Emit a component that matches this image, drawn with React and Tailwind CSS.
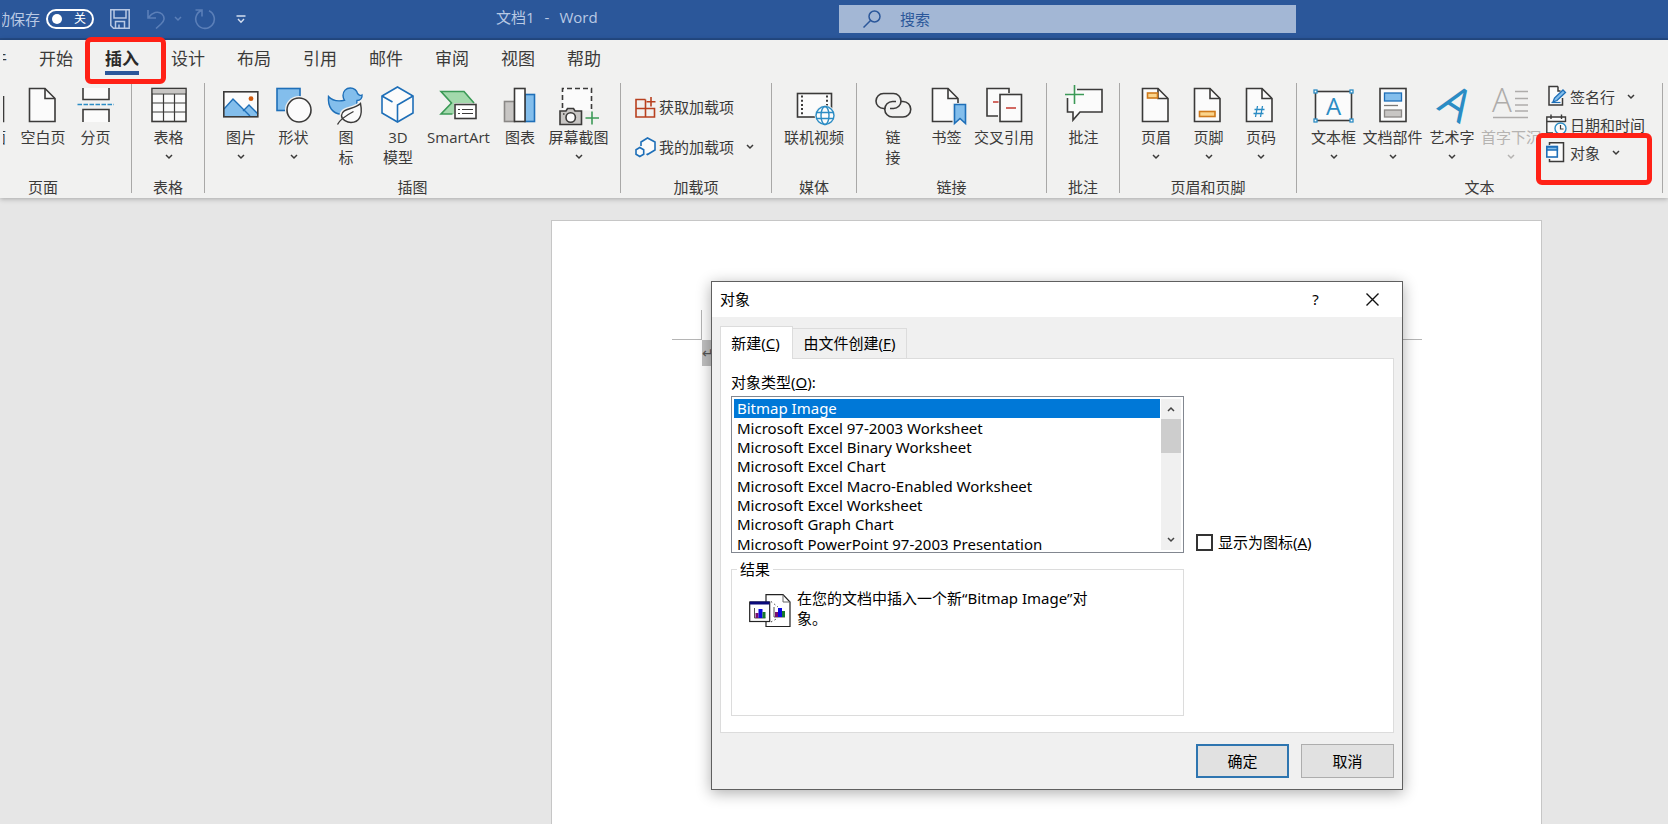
import React, { useState } from "react";

const INK = "#3b3a39";
const BLUE = "#1e6fb8";
const SKY = "#83beec";

function Icon({ children, w = 40, h = 36 }) {
  return (
    <svg
      width={w}
      height={h}
      viewBox={`0 0 ${w} ${h}`}
      fill="none"
      stroke={INK}
      strokeWidth="1.6"
      className="shrink-0 overflow-visible"
      aria-hidden="true"
    >
      {children}
    </svg>
  );
}

function Chevron({ className = "" }) {
  return (
    <svg width="8" height="6" viewBox="0 0 8 6" fill="none" stroke="currentColor" strokeWidth="1.5" className={`shrink-0 ${className}`} aria-hidden="true">
      <path d="M1 1l3 3 3-3" />
    </svg>
  );
}

function Page({ x = 6.5 }) {
  return (
    <g transform={`translate(${x} 2.5)`}>
      <path d="M15.5 0H0V33H25.5V10Z" fill="#fbfbfb" />
      <path d="M15.5 0V10H25.5" />
    </g>
  );
}

const BlankPage = () => (
  <Icon>
    <Page x={6.5} />
  </Icon>
);
const PageBreak = () => (
  <Icon>
    <path d="M7 2V13.5H33V2" fill="#fbfbfb" />
    <path d="M7 36V23.5H33V36" fill="#fbfbfb" />
    <path d="M1.5 18.5H38" stroke="#2b8cc4" strokeDasharray="4.5 1.5" />
  </Icon>
);
const TableIcon = () => (
  <Icon>
    <rect x="3" y="2.5" width="34" height="33" fill="#fbfbfb" />
    <rect x="3.8" y="3" width="32.5" height="4.5" fill="#c8c6c4" stroke="none" />
    <path d="M3 8H37M3 17H37M3 26H37M14.5 8V35M25.5 8V35" strokeWidth="1.2" />
  </Icon>
);
const PictureIcon = () => (
  <Icon>
    <rect x="2.8" y="5.8" width="34" height="25" fill="#fbfbfb" stroke="none" />
    <path d="M3 23L12 13L30 31H3Z" fill={SKY} stroke="none" />
    <path d="M22 25L28 19L37 28V31H27Z" fill={SKY} stroke="none" />
    <path d="M3 23L12 13L29 30M22 25L28 19L37 28" stroke={BLUE} strokeWidth="1.4" />
    <circle cx="30" cy="12.7" r="2.4" fill="#d05a0c" stroke="none" />
    <rect x="2.8" y="5.8" width="34" height="25" />
  </Icon>
);
const ShapesIcon = () => (
  <Icon>
    <rect x="3" y="2.5" width="23" height="22" fill={SKY} stroke={BLUE} />
    <circle cx="25" cy="24" r="14" fill="#f1f1f0" stroke="none" />
    <circle cx="25" cy="24" r="12" fill="#fbfbfb" />
  </Icon>
);
const DuckIcon = () => (
  <Icon>
    <path
      d="M2.5 10.5C6 14.5 11 15.8 18.5 14.3C17.3 12.5 17 11 17 9.5C17 5.200 20 2 24.3 2C28 2 31 4.500 31.5 7.500C33 9.500 35 9.800 36 9C36.500 12 34.500 14.500 31 14.500C30.500 16 31.300 17.500 30.500 20C28.500 25.500 22 28.500 15 28.200C7 27.500 1.500 21.500 2.500 10.500Z"
      fill={SKY}
      stroke={BLUE}
      strokeWidth="1.4"
    />
    <path d="M34.500 17.500C37 30 33 36.500 25 36.500C21.500 36.500 15.500 34 15.500 29.500C16 21.500 28 24 34.500 17.500Z" fill="#f1f1f0" stroke="#f1f1f0" strokeWidth="4" />
    <path d="M11.500 38.500C13 34.500 14.500 32.500 17 30.500" stroke="#f1f1f0" strokeWidth="4" />
    <path d="M34.500 17.500C37 30 33 36.500 25 36.500C21.500 36.500 15.500 34 15.500 29.500C16 21.500 28 24 34.500 17.500Z" fill="#fbfbfb" strokeWidth="1.4" />
    <path d="M11.500 38.500C14 33.500 19 30 27.500 25.500" strokeWidth="1.4" />
  </Icon>
);
const CubeIcon = () => (
  <Icon>
    <path d="M19.500 1L35 10V27L19.500 36L4 27V10Z" fill="#fbfbfb" stroke={BLUE} />
    <path d="M35 10L19.500 19V36M4 10L14.500 16" stroke={BLUE} />
  </Icon>
);
const SmartArtIcon = () => (
  <Icon>
    <path d="M2 5.500H25L35.500 17H15V28H2L12.500 17Z" fill="#a3d9ac" stroke="none" />
    <path d="M35 17L25 5.500H2L12.500 17L2 28H13.500" stroke="#3c9a57" />
    <rect x="16" y="18.500" width="21" height="14" fill="#fff" />
    <path d="M19 23.500H21M23 23.500H34M19 27.500H21M23 27.500H34" strokeWidth="1.2" />
  </Icon>
);
const ChartIcon = () => (
  <Icon>
    <rect x="4.500" y="15.500" width="10" height="20" fill="#c8c6c4" stroke="#8a8886" />
    <rect x="25" y="8.500" width="9.500" height="27" fill={SKY} stroke={BLUE} />
    <rect x="14.500" y="2.500" width="10.500" height="33" fill="#fff" />
  </Icon>
);
const ScreenshotIcon = () => (
  <Icon>
    <rect x="3.500" y="2.500" width="29" height="22" fill="#fbfbfb" stroke="none" />
    <path d="M3.500 22V2.500H32.500V24" strokeDasharray="5 3" />
    <path d="M1 25H7L8.500 22.500H14.500L16 25H22.500V38.500H1Z" fill="#c8c6c4" />
    <circle cx="11.700" cy="31.500" r="4.700" fill="#fbfbfb" />
    <path d="M4 28h1.500" />
    <path d="M33 25.500V38.500M26.500 32H40" stroke="#3c9a57" />
  </Icon>
);
const VideoIcon = () => (
  <Icon>
    <rect x="3.500" y="7.500" width="34" height="23.500" fill="#fbfbfb" />
    <path d="M8 9.500V30M33 9.500V20" strokeWidth="2" strokeDasharray="2 2.200" />
    <circle cx="31" cy="29.500" r="10.500" fill="#f1f1f0" stroke="none" />
    <g stroke="#2b8cc4" strokeWidth="1.400">
      <circle cx="31" cy="29.500" r="9" fill="#fbfbfb" />
      <ellipse cx="31" cy="29.500" rx="4" ry="9" />
      <path d="M22.500 26.500H39.500M22.500 32.500H39.500" />
    </g>
  </Icon>
);
const LinkIcon = () => (
  <Icon>
    <path d="M12.500 22.500H10.500A7.500 7.500 0 0 1 10.500 7.500H20.500A7.500 7.500 0 0 1 20.500 22.500H17" />
    <path d="M28 15.500H30A7.500 7.500 0 0 1 30 31H19.500A7.700 7.700 0 0 1 19.500 15.500H23" />
  </Icon>
);
const BookmarkIcon = () => (
  <Icon>
    <Page x={5.500} />
    <path d="M25.500 17H40V37H25.500Z" fill="#f1f1f0" stroke="none" />
    <path d="M27.500 18.500H38.500V37.500L33 32.500L27.500 37.500Z" fill={SKY} stroke={BLUE} />
  </Icon>
);
const CrossRefIcon = () => (
  <Icon>
    <path d="M14 30H3V2.500H25V7" fill="#fbfbfb" />
    <path d="M9 16H14.500" stroke="#c8453c" />
    <rect x="16" y="8.500" width="21.500" height="27" fill="#fbfbfb" />
    <path d="M22 22H32" stroke="#c8453c" />
  </Icon>
);
const CommentIcon = () => (
  <Icon>
    <path d="M11 3.500H38V26H16L9 34V26H3.500V10Z" fill="#fbfbfb" stroke="none" />
    <path d="M13 3.500H38V26H16L9 34V26H3.500V12" />
    <path d="M10.500 -1V18M1 8.500H20" stroke="#3c9a57" />
  </Icon>
);
const HeaderIcon = () => (
  <Icon>
    <Page x={6.500} />
    <rect x="11.500" y="7" width="10" height="5" fill="#fbd58c" stroke="#cf7a1c" />
  </Icon>
);
const FooterIcon = () => (
  <Icon>
    <Page x={5.500} />
    <rect x="10.500" y="25.500" width="15.500" height="5" fill="#fbd58c" stroke="#cf7a1c" />
  </Icon>
);
const PageNumberIcon = () => (
  <Icon>
    <Page x={5.500} />
    <path d="M16.500 20L14.500 31M21.500 20L19.500 31M13.500 23.500H23.500M12.500 27.500H22.500" stroke="#2b8cc4" strokeWidth="1.300" />
  </Icon>
);
const TextBoxIcon = () => (
  <Icon>
    <rect x="1.500" y="5.500" width="36" height="29" fill="#fbfbfb" />
    <text x="19.500" y="28.500" textAnchor="middle" fontSize="24" fontFamily="Open Sans" fill="#2b8cc4" stroke="none">A</text>
    <g fill="#fff" stroke="#2b8cc4" strokeWidth="1.300">
      <rect x="0" y="4" width="3" height="3" />
      <rect x="36" y="4" width="3" height="3" />
      <rect x="0" y="33" width="3" height="3" />
      <rect x="36" y="33" width="3" height="3" />
    </g>
  </Icon>
);
const PartsIcon = () => (
  <Icon>
    <rect x="7" y="2.500" width="26" height="33" fill="#fbfbfb" />
    <rect x="11.500" y="7" width="17" height="8" fill={SKY} stroke={BLUE} strokeWidth="1.300" />
    <path d="M11 19.500H25" stroke="#797775" strokeWidth="1.300" />
    <rect x="11.500" y="24" width="17" height="7" fill="#c8c6c4" stroke="#8a8886" strokeWidth="1.300" />
  </Icon>
);
const WordArtIcon = () => (
  <Icon>
    <text x="16" y="30.500" textAnchor="middle" fontSize="45" fontFamily="Open Sans" fill="#2b8cc4" stroke="none" transform="rotate(33 16 30.500)">A</text>
  </Icon>
);
const DropCapIcon = () => (
  <Icon>
    <text x="11" y="26" textAnchor="middle" fontSize="33" fontWeight="300" fontFamily="Open Sans" fill="#aeacaa" stroke="none">A</text>
    <path d="M24 5.500H37M24 12.500H37M24 19H37M24 25H37M2 31.500H37" stroke="#aeacaa" strokeWidth="1.400" />
  </Icon>
);

const GetAddinsIcon = () => (
  <Icon w={20} h={20}>
    <path d="M10.500 2.500H1V20H19.500V11.500H1M10.500 2.500V20" stroke="#b8401f" />
    <path d="M16 0V9.500M11.500 4.700H20.500" stroke="#b8401f" />
  </Icon>
);
const MyAddinsIcon = () => (
  <Icon w={20} h={20}>
    <path d="M6 9V5L12.500 1L20 5V13L12.500 17.500L11.500 17" stroke={BLUE} fill="#fbfbfb" />
    <path d="M4.800 10.500L8.700 12.800V17.200L4.800 19.500L1 17.200V12.800Z" stroke={BLUE} fill="#fbfbfb" />
  </Icon>
);
const SignatureIcon = () => (
  <Icon w={20} h={20}>
    <path d="M12 -.5H3V18H16.500V11M12 -.5V4H14.500" fill="#fbfbfb" strokeWidth="1.500" />
    <path d="M17 3L19.500 5.500L11 13.500L7 15L8.500 11Z" fill={SKY} stroke={BLUE} strokeWidth="1.300" />
    <path d="M5.500 15.500H14.500" stroke={BLUE} strokeWidth="1.200" />
  </Icon>
);
const DateIcon = () => (
  <Icon w={20} h={20}>
    <path d="M7 18H.8V2H19.500V7" fill="#fbfbfb" strokeWidth="1.400" />
    <path d="M.8 6.500H19.500M5 -.5V4M15.500 -.5V4" strokeWidth="1.400" />
    <circle cx="14.500" cy="13.500" r="5.500" fill="#fbfbfb" stroke="#2b8cc4" strokeWidth="1.400" />
    <path d="M14.500 10V14H17.500" strokeWidth="1.200" />
  </Icon>
);
const ObjectIcon = () => (
  <Icon w={20} h={20}>
    <path d="M3.500 2V-.2H17.500V18.500H3.500V16" fill="#fbfbfb" strokeWidth="1.500" />
    <rect x=".8" y="3.500" width="10.500" height="10.500" fill="#fff" stroke={BLUE} />
    <path d="M.8 4H11.300V7H.8Z" fill={SKY} stroke={BLUE} />
  </Icon>
);

function Tool({ icon, lines, menu, width, disabled }) {
  return (
    <button
      type="button"
      disabled={disabled}
      className={`flex shrink-0 flex-col items-center pt-[3px] ${width} ${disabled ? "text-[#b5b3b1]" : "text-[#3b3a39]"}`}
    >
      {icon}
      <span className="mt-[5px] flex flex-col items-center leading-5 whitespace-nowrap">
        {lines.map((l) => (
          <span key={l}>{l}</span>
        ))}
      </span>
      {menu && <Chevron className="mt-[7px]" />}
    </button>
  );
}

function Group({ label, width, labelPad = "", children }) {
  return (
    <section
      aria-label={label}
      className={`flex h-[110px] shrink-0 flex-col justify-between border-r border-[#a9a8a7] ${width}`}
    >
      <div className="flex items-start">{children}</div>
      <div className={`text-center leading-3 ${labelPad}`}>{label}</div>
    </section>
  );
}

function SmallTool({ icon, label, menu, height, className = "" }) {
  return (
    <button type="button" className={`flex items-center gap-1 whitespace-nowrap ${height} ${className}`}>
      {icon}
      <span>{label}</span>
      {menu && <Chevron className="ml-2" />}
    </button>
  );
}

const tabs = ["开始", "插入", "设计", "布局", "引用", "邮件", "审阅", "视图", "帮助"];

function TitleBar() {
  return (
    <header className="flex h-10 items-center border-b-2 border-[#244b86] bg-[#2b579a] text-[15px] text-[#b9c9e4]">
      <label className="flex w-[94px] shrink-0 items-center gap-1.5 overflow-hidden">
        <span className="ml-0.5 flex w-[38px] justify-end overflow-hidden whitespace-nowrap">自动保存</span>
        <input type="checkbox" className="sr-only" />
        <span className="flex h-5 w-12 shrink-0 items-center justify-between rounded-full border-2 border-white pr-1.5 pl-1 text-xs text-white">
          <span className="size-2.5 rounded-full bg-white" />
          关
        </span>
      </label>
      <button type="button" aria-label="保存" className="ml-4">
        <svg width="20" height="20" viewBox="0 0 20 20" fill="none" stroke="#b9c9e4" strokeWidth="1.500">
          <path d="M.8 .8H19.200V19.200H3.500L.8 16.500ZM4 1V9H16V1M5.500 19V12.500H14.500V19M9 19V15.500" />
        </svg>
      </button>
      <button type="button" aria-label="撤消" className="ml-4 flex items-center gap-2 text-[#5b7fb8]">
        <svg width="20" height="20" viewBox="0 0 20 20" fill="none" stroke="currentColor" strokeWidth="1.600">
          <path d="M2 1V9H10M2.500 8.500C6 3.500 12 1.500 16 5C19.500 8.500 18 12.500 15 15L10 19.500" />
        </svg>
        <Chevron />
      </button>
      <button type="button" aria-label="恢复" className="ml-3 text-[#5b7fb8]">
        <svg width="22" height="22" viewBox="0 0 22 22" fill="none" stroke="currentColor" strokeWidth="1.600">
          <path d="M1.500 2H8V8.500M7.500 2.500A9.300 9.300 0 1 0 15 2.700" />
        </svg>
      </button>
      <button type="button" aria-label="自定义快速访问工具栏" className="ml-5">
        <svg width="10" height="9" viewBox="0 0 10 9" fill="none" stroke="#d5dff0" strokeWidth="1.400">
          <path d="M.5 1H9.500M2 4L5 7.200L8 4" />
        </svg>
      </button>
      <div className="ml-[250px] flex gap-2.5 pb-1">
        <span>文档1</span>
        <span>-</span>
        <span>Word</span>
      </div>
      <label className="mr-4 ml-auto flex h-7 w-[457px] items-center gap-[19px] bg-[#a3b7d5] pl-6 text-[#2b579a] lg:mr-[372px]">
        <svg width="18" height="18" viewBox="0 0 18 18" fill="none" stroke="#2b579a" strokeWidth="1.500">
          <circle cx="11.500" cy="6.500" r="5.500" />
          <path d="M7.500 10.500L.5 17.500" />
        </svg>
        <input type="text" aria-label="搜索" placeholder="搜索" className="min-w-0 flex-1 bg-transparent outline-none placeholder:text-[#2b579a]" />
      </label>
    </header>
  );
}

function Ribbon() {
  return (
    <div className="relative z-10 bg-[#f1f1f0] pb-[5px] text-[15px] text-[#3b3a39] shadow-[0_1px_5px_rgba(0,0,0,0.28)]">
      <nav className="flex h-[43px] items-start gap-8 text-[17px] leading-[38px]">
        <button type="button" className="ml-[3px] flex w-1 justify-end overflow-hidden whitespace-nowrap">文件</button>
        {tabs.map((t) =>
          t === "插入" ? (
            <button key={t} type="button" className="relative flex h-[35px] flex-col border-b-4 border-[#2b579a] font-bold text-[#2b2a29]">
              {t}
              <span className="pointer-events-none absolute -top-[3px] -left-5 h-[47px] w-[81px] rounded-md border-5 border-[#ff2116]" />
            </button>
          ) : (
            <button key={t} type="button" className="shrink-0">{t}</button>
          )
        )}
      </nav>
      <div className="flex">
        <Group label="页面" width="w-[132px]" labelPad="pr-[45px]">
          <button type="button" className="mr-[7px] ml-[3px] flex w-[3px] flex-col items-end overflow-hidden pt-[3px] whitespace-nowrap">
            <Icon w={8}>
              <path d="M5.500 10V35.500H0" />
            </Icon>
            <span className="mt-[5px] leading-5">封面</span>
          </button>
          <Tool icon={<BlankPage />} lines={["空白页"]} width="w-[60px]" />
          <Tool icon={<PageBreak />} lines={["分页"]} width="w-[45px]" />
        </Group>
        <Group label="表格" width="w-[73px]">
          <Tool icon={<TableIcon />} lines={["表格"]} width="w-[73px]" menu />
        </Group>
        <Group label="插图" width="w-[416px] *:first:pl-2.5">
          <Tool icon={<PictureIcon />} lines={["图片"]} width="w-[52px]" menu />
          <Tool icon={<ShapesIcon />} lines={["形状"]} width="w-[53px]" menu />
          <Tool icon={<DuckIcon />} lines={["图", "标"]} width="w-[52px]" />
          <Tool icon={<CubeIcon />} lines={["3D", "模型"]} width="w-[52px]" />
          <Tool icon={<SmartArtIcon />} lines={["SmartArt"]} width="w-[69px]" />
          <Tool icon={<ChartIcon />} lines={["图表"]} width="w-[54px]" />
          <Tool icon={<ScreenshotIcon />} lines={["屏幕截图"]} width="w-[63px]" menu />
        </Group>
        <Group label="加载项" width="w-[151px]">
          <div className="flex flex-col pt-1 pl-3.5">
            <SmallTool icon={<GetAddinsIcon />} label="获取加载项" height="h-10" />
            <SmallTool icon={<MyAddinsIcon />} label="我的加载项" height="h-10" menu />
          </div>
        </Group>
        <Group label="媒体" width="w-[85px]">
          <Tool icon={<VideoIcon />} lines={["联机视频"]} width="w-[84px]" />
        </Group>
        <Group label="链接" width="w-[190px] *:first:pl-2.5">
          <Tool icon={<LinkIcon />} lines={["链", "接"]} width="w-[52px]" />
          <Tool icon={<BookmarkIcon />} lines={["书签"]} width="w-[55px]" />
          <Tool icon={<CrossRefIcon />} lines={["交叉引用"]} width="w-[60px]" />
        </Group>
        <Group label="批注" width="w-[73px]">
          <Tool icon={<CommentIcon />} lines={["批注"]} width="w-[73px]" />
        </Group>
        <Group label="页眉和页脚" width="w-[177px] *:first:pl-2.5">
          <Tool icon={<HeaderIcon />} lines={["页眉"]} width="w-[52px]" menu />
          <Tool icon={<FooterIcon />} lines={["页脚"]} width="w-[53px]" menu />
          <Tool icon={<PageNumberIcon />} lines={["页码"]} width="w-[52px]" menu />
        </Group>
        <Group label="文本" width="w-[366px] *:first:pl-2.5">
          <Tool icon={<TextBoxIcon />} lines={["文本框"]} width="w-[53px]" menu />
          <Tool icon={<PartsIcon />} lines={["文档部件"]} width="w-[65px]" menu />
          <Tool icon={<WordArtIcon />} lines={["艺术字"]} width="w-[54px]" menu />
          <Tool icon={<DropCapIcon />} lines={["首字下沉"]} width="w-[64px]" menu disabled />
          <div className="relative -ml-1.5 flex flex-col items-start pl-px">
            <SmallTool icon={<SignatureIcon />} label="签名行" height="h-7" menu className="pl-2" />
            <SmallTool icon={<DateIcon />} label="日期和时间" height="h-7" className="pl-2" />
            <div className="relative bg-[#f1f1f0]">
              <SmallTool icon={<ObjectIcon />} label="对象" height="h-7" menu className="pl-2" />
              <span className="pointer-events-none absolute -top-1.5 -left-0.5 h-[52px] w-[116px] rounded-md border-5 border-[#ff2116]" />
            </div>
          </div>
        </Group>
      </div>
    </div>
  );
}

const types = [
  "Bitmap Image",
  "Microsoft Excel 97-2003 Worksheet",
  "Microsoft Excel Binary Worksheet",
  "Microsoft Excel Chart",
  "Microsoft Excel Macro-Enabled Worksheet",
  "Microsoft Excel Worksheet",
  "Microsoft Graph Chart",
  "Microsoft PowerPoint 97-2003 Presentation",
];

function ResultIcon() {
  const bars = (
    <>
      <path d="M0 0V10H11" stroke="#555" strokeWidth="1" fill="none" />
      <rect x="1" y="5" width="3" height="5" fill="#7a0f6e" />
      <rect x="4" y="1" width="4" height="9" fill="#0a0ae0" />
      <rect x="8" y="4" width="3" height="6" fill="#157a2c" />
    </>
  );
  return (
    <svg width="42" height="34" viewBox="0 0 42 34" className="mt-1.5 shrink-0" aria-hidden="true">
      <path d="M17 .7H34L41 8V32.500H17Z" fill="#fff" stroke="#222" strokeWidth="1.200" />
      <path d="M34 .7V8H41" fill="none" stroke="#666" />
      <path d="M22 7.500L29 13M22 28L29 24" stroke="#444" strokeDasharray="1.500 2.500" />
      <g transform="translate(25 13)">{bars}</g>
      <rect x=".7" y="8" width="20" height="19.500" fill="#fff" stroke="#222" strokeWidth="1.200" />
      <rect x="1" y="7.500" width="19.500" height="3" fill="#0a0a7a" />
      <g transform="translate(5.500 14)">{bars}</g>
    </svg>
  );
}

function ObjectDialog() {
  const [selected, setSelected] = useState(0);
  return (
    <div
      role="dialog"
      aria-label="对象"
      className="absolute top-[83px] left-[711px] flex w-[692px] flex-col border border-[#5f5f5f] bg-[#f0f0f0] font-['Noto_Sans','Noto_Sans_CJK_SC',sans-serif] text-[15px] text-black shadow-[0_3px_14px_rgba(0,0,0,0.32)]"
    >
      <div className="flex h-[35px] items-center bg-white pl-2">
        <h1 className="flex-1">对象</h1>
        <button type="button" aria-label="帮助" className="w-[55px]">?</button>
        <button type="button" aria-label="关闭" className="flex w-[59px] justify-center">
          <svg width="13" height="13" viewBox="0 0 13 13" stroke="#111" strokeWidth="1.400">
            <path d="M.5 .5L12.500 12.500M12.500 .5L.5 12.500" />
          </svg>
        </button>
      </div>

      <div className="px-2 pt-[9px]">
        <div role="tablist" className="relative flex items-end">
          <button type="button" role="tab" aria-selected="true" className="-mb-px h-[33px] w-[73px] border border-b-0 border-[#dcdcdc] bg-white pr-0.5">
            新建(<u>C</u>)
          </button>
          <button type="button" role="tab" aria-selected="false" className="h-[30px] w-[114px] border border-b-0 border-l-0 border-[#dcdcdc] bg-[#f0f0f0]">
            由文件创建(<u>F</u>)
          </button>
        </div>
        <div className="flex h-[375px] gap-3 border border-[#dcdcdc] bg-white pt-3 pl-2.5">
          <div className="flex w-[453px] flex-col">
            <div id="types-label" className="leading-[22px]">
              对象类型(<u>O</u>):
            </div>
            <div className="mt-[3px] flex h-[157px] overflow-hidden border border-[#828790] p-0.5">
              <ul role="listbox" aria-labelledby="types-label" className="grid h-[155px] flex-1 auto-rows-fr">
                {types.map((t, i) => (
                  <li
                    key={t}
                    role="option"
                    aria-selected={i === selected}
                    onClick={() => setSelected(i)}
                    className={`flex items-center pl-[3px] leading-none whitespace-nowrap ${i === selected ? "bg-[#0078d7] text-white" : ""}`}
                  >
                    {t}
                  </li>
                ))}
              </ul>
              <div className="ml-px flex w-5 flex-col items-center bg-[#f0f0f0] text-[#444]">
                <span className="flex h-5 items-center">
                  <Chevron className="rotate-180" />
                </span>
                <span className="h-[34px] w-full bg-[#cdcdcd]" />
                <span className="mt-auto flex h-5 items-center">
                  <Chevron />
                </span>
              </div>
            </div>
            <fieldset className="mt-1 h-[159px] border border-[#dcdcdc] pl-[17px]">
              <legend className="-ml-3 px-[3px] leading-6">结果</legend>
              <div className="flex gap-1.5 pt-[7px]">
                <ResultIcon />
                <p className="w-[295px] leading-5">在您的文档中插入一个新“Bitmap Image”对象。</p>
              </div>
            </fieldset>
          </div>
          <label className="mt-[159px] flex h-6 items-center gap-[5px]">
            <input type="checkbox" className="size-[17px] appearance-none border-2 border-[#333] bg-white" />
            <span>
              显示为图标(<u>A</u>)
            </span>
          </label>
        </div>
      </div>

      <div className="flex justify-end gap-3 px-2 pt-[11px] pb-[11px]">
        <button type="button" className="h-[34px] w-[93px] border-2 border-[#2e75b0] bg-[#e1e1e1]">确定</button>
        <button type="button" className="h-[34px] w-[93px] border border-[#adadad] bg-[#e1e1e1]">取消</button>
      </div>
    </div>
  );
}

export default function App() {
  return (
    <div className="flex min-h-screen flex-col overflow-hidden bg-[#e6e6e6] font-['Open_Sans','Noto_Sans_CJK_SC',sans-serif]">
      <TitleBar />
      <Ribbon />
      <main className="relative flex min-h-[620px] flex-1 flex-col pt-[22px] pl-[551px]">
        <div className="relative w-[991px] flex-1 border border-b-0 border-[#c6c6c6] bg-white">
          <span className="absolute top-[89px] left-[120px] h-[30px] w-[30px] border-r border-b border-[#b5b5b5]" />
          <span className="absolute top-[118px] right-[119px] h-px w-8 bg-[#b5b5b5]" />
          <span className="absolute top-[119px] left-[150px] h-[26px] w-5 bg-[#c0c0c0] text-sm leading-[26px] text-[#555]">↵</span>
        </div>
        <ObjectDialog />
      </main>
    </div>
  );
}
